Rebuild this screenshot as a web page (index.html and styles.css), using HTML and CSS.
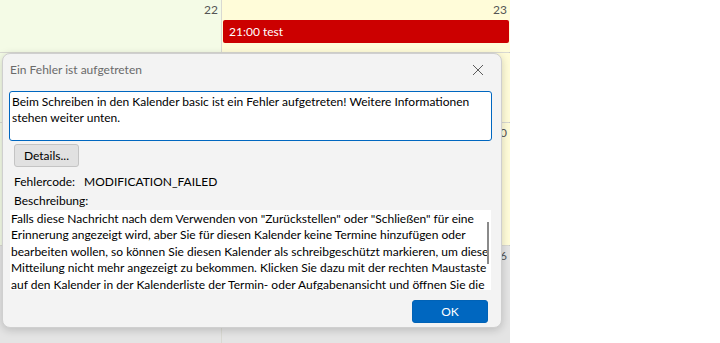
FILE: index.html
```html
<!DOCTYPE html>
<html lang="de">
<head>
  <meta charset="UTF-8" />
  <title>Ein Fehler ist aufgetreten</title>
  <link rel="stylesheet" href="styles.css">
</head>
<body>
  <div class="screen">
    <div class="calendar">
      <div class="cell past"><span class="day">22</span></div>
      <div class="cell today">
        <span class="day">23</span>
        <div class="event">21:00 test</div>
      </div>
      <div class="cell past"></div>
      <div class="cell today"></div>
      <div class="cell past"></div>
      <div class="cell today"><span class="day">30</span></div>
      <div class="cell other"></div>
      <div class="cell other"><span class="day">6</span></div>
    </div>

    <div class="dialog">
      <div class="titlebar">
        <span class="title">Ein Fehler ist aufgetreten</span>
        <svg class="close" width="12" height="12" viewBox="0 0 12 12">
          <path d="M1 1 L11 11 M11 1 L1 11" stroke="#5c5c5c" stroke-width="1" fill="none"/>
        </svg>
      </div>
      <div class="message">Beim Schreiben in den Kalender basic ist ein Fehler aufgetreten! Weitere Informationen<br>stehen weiter unten.</div>
      <button class="btn details">Details...</button>
      <div class="info">
        <div class="code"><span>Fehlercode:</span><span>MODIFICATION_FAILED</span></div>
        <div class="label">Beschreibung:</div>
      </div>
      <div class="description">
        <div class="desc-text">Falls diese Nachricht nach dem Verwenden von "Zurückstellen" oder "Schließen" für eine<br>Erinnerung angezeigt wird, aber Sie für diesen Kalender keine Termine hinzufügen oder<br>bearbeiten wollen, so können Sie diesen Kalender als schreibgeschützt markieren, um diese<br>Mitteilung nicht mehr angezeigt zu bekommen. Klicken Sie dazu mit der rechten Maustaste<br>auf den Kalender in der Kalenderliste der Termin- oder Aufgabenansicht und öffnen Sie die</div>
        <div class="scrollbar"></div>
      </div>
      <div class="footer">
        <button class="btn ok">OK</button>
      </div>
    </div>
  </div>
</body>
</html>
```

FILE: styles.css
```css
body {
  margin: 0;
  background: white;
  font-family: Lato, 'Liberation Sans', sans-serif;
  font-size: 12px;
  color: #000;
}
.screen {
  position: relative;
  width: 720px;
  height: 343px;
  overflow: hidden;
}
.calendar {
  display: grid;
  grid-template-columns: 221px 288px;
  grid-template-rows: 52px 69px 122px 100px;
  gap: 1px;
  width: 510px;
  height: 343px;
  background: #d9d9d2;
  border-right: 1px solid #c9c9c9;
  box-sizing: border-box;
}
.cell {
  position: relative;
}
.cell.past {
  background: #f4fbe6;
}
.cell.today {
  background: #fffcd9;
}
.cell.other {
  background: #e4e4e4;
}
.day {
  display: block;
  text-align: right;
  padding: 2px 3px 0 0;
  color: #555;
  font-size: 12px;
  line-height: 15px;
}
.event {
  margin: 3px 1px 0 1px;
  height: 23px;
  line-height: 23px;
  padding-left: 6px;
  background: #cc0000;
  color: white;
  border-radius: 2px;
}

.dialog {
  position: absolute;
  left: 2px;
  top: 53px;
  width: 500px;
  height: 275px;
  box-sizing: border-box;
  background: #f3f3f3;
  border: 1px solid #cfcfcf;
  border-radius: 8px;
  box-shadow: 0 2px 8px rgba(0, 0, 0, 0.18);
  display: flex;
  flex-direction: column;
  padding: 0 9px 0 6px;
}
.titlebar {
  display: flex;
  align-items: center;
  justify-content: space-between;
  height: 31px;
  padding: 0 8px 0 1px;
}
.title {
  color: #6a6a6a;
}
.message {
  margin-top: 6px;
  height: 50px;
  box-sizing: border-box;
  background: white;
  border: 1px solid #0067c0;
  border-radius: 3px;
  padding: 2px 2px 0;
  line-height: 16.4px;
  white-space: nowrap;
  overflow: hidden;
}
.btn {
  font-family: inherit;
  font-size: 12px;
  height: 23px;
  border-radius: 3px;
  cursor: pointer;
}
.details {
  align-self: flex-start;
  margin: 3px 0 0 5px;
  width: 65px;
  padding: 0;
  background: #e1e1e1;
  border: 1px solid #c4c4c4;
  color: #000;
}
.info {
  padding-left: 5px;
  line-height: 19px;
  margin-top: 5px;
}
.code span:first-child {
  margin-right: 9px;
}
.description {
  position: relative;
  margin: 0 1px 0 1px;
  height: 80px;
  box-sizing: border-box;
  padding-top: 1px;
  background: white;
  overflow: hidden;
}
.desc-text {
  line-height: 16.4px;
  padding-left: 1px;
  white-space: nowrap;
}
.scrollbar {
  position: absolute;
  right: 2px;
  top: 12px;
  width: 2px;
  height: 42px;
  background: #8a8a8a;
}
.footer {
  display: flex;
  justify-content: flex-end;
  margin-top: 10px;
  padding-right: 4px;
}
.ok {
  width: 76px;
  background: #0067c0;
  border: 1px solid #0062b6;
  color: white;
}
```
